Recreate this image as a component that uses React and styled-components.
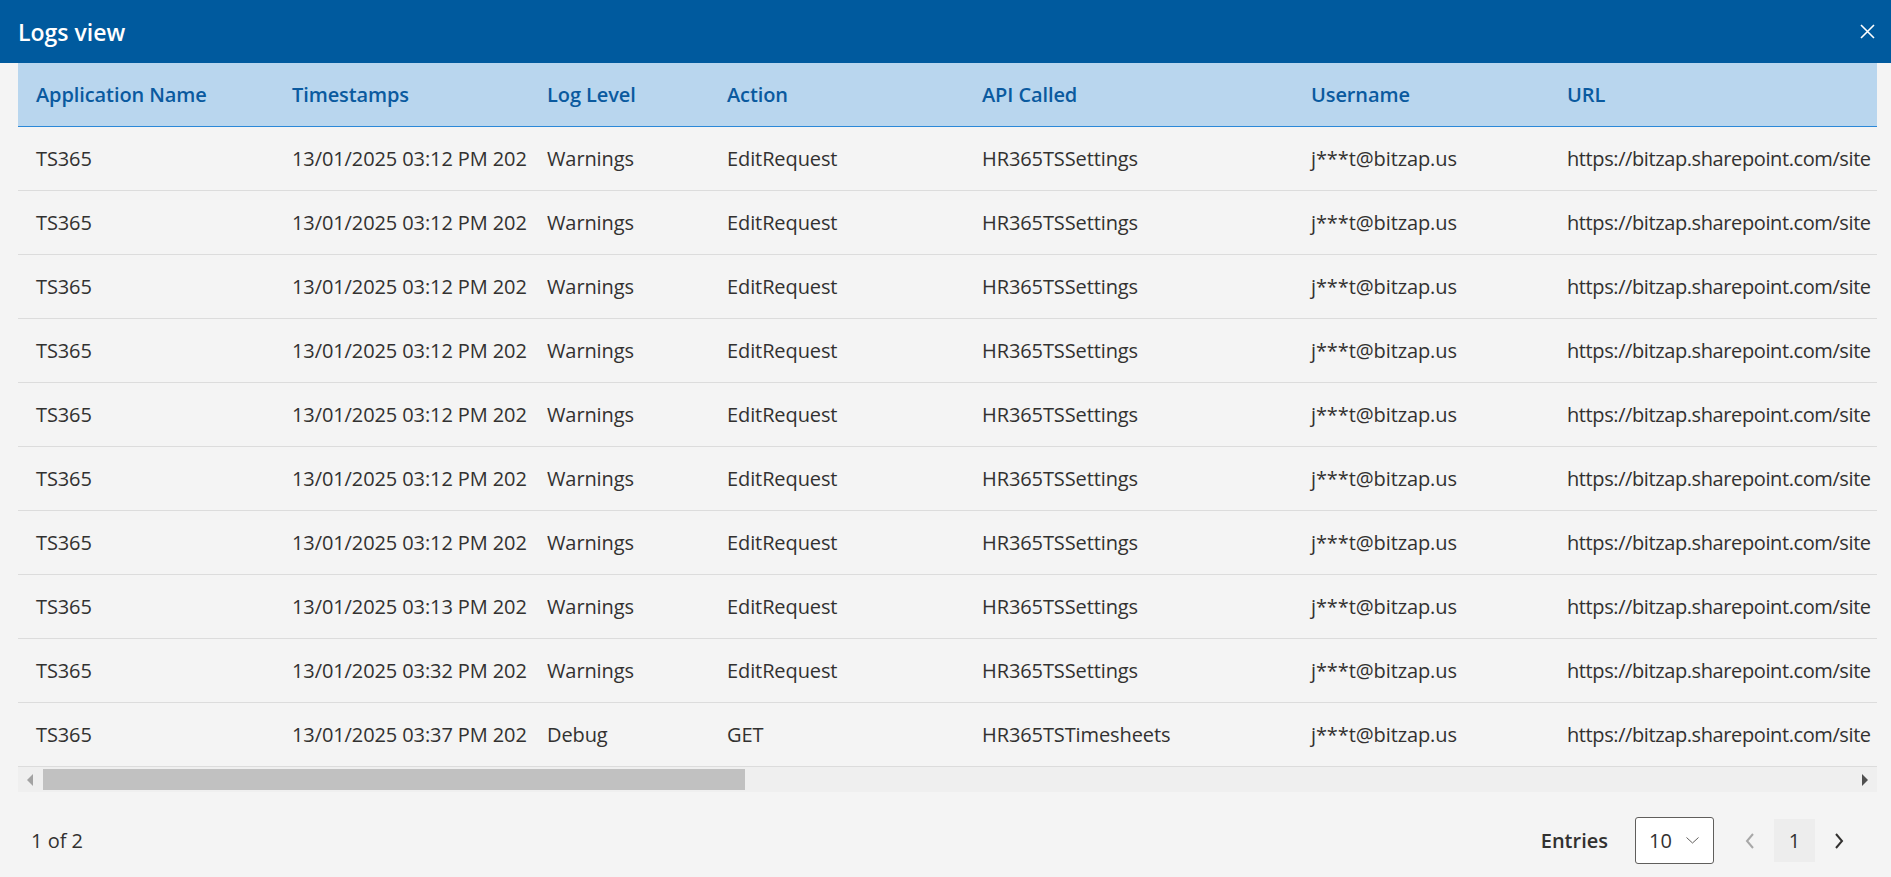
import React from 'react';
import styled, { createGlobalStyle } from 'styled-components';

const GlobalStyle = createGlobalStyle`
  html, body {
    margin: 0;
    padding: 0;
    background: #f4f4f4;
    font-family: "Open Sans", "Noto Sans", sans-serif;
  }
  * { box-sizing: border-box; }
`;

const columns = [
  { key: 'app', label: 'Application Name', width: '256px' },
  { key: 'time', label: 'Timestamps', width: '255px' },
  { key: 'level', label: 'Log Level', width: '180px' },
  { key: 'action', label: 'Action', width: '255px' },
  { key: 'api', label: 'API Called', width: '329px' },
  { key: 'user', label: 'Username', width: '256px' },
  { key: 'url', label: 'URL', width: 'minmax(0, 1fr)', tight: true },
];

const gridCols = columns.map((c) => c.width).join(' ');

const makeRow = (time, level = 'Warnings', action = 'EditRequest', api = 'HR365TSSettings') => ({
  app: 'TS365',
  time: `13/01/2025 ${time} 202`,
  level,
  action,
  api,
  user: 'j***t@bitzap.us',
  url: 'https://bitzap.sharepoint.com/site',
});

const logs = [
  makeRow('03:12 PM'),
  makeRow('03:12 PM'),
  makeRow('03:12 PM'),
  makeRow('03:12 PM'),
  makeRow('03:12 PM'),
  makeRow('03:12 PM'),
  makeRow('03:12 PM'),
  makeRow('03:13 PM'),
  makeRow('03:32 PM'),
  makeRow('03:37 PM', 'Debug', 'GET', 'HR365TSTimesheets'),
];

const Page = styled.div`
  height: 100vh;
  display: flex;
  flex-direction: column;
`;

const TitleBar = styled.header`
  height: 63px;
  flex: none;
  background: #005a9e;
  display: flex;
  align-items: center;
  justify-content: space-between;
  padding: 0 9px 0 18px;
`;

const Title = styled.h1`
  margin: 0;
  color: #fff;
  font-size: 23px;
  font-weight: 600;
`;

const CloseButton = styled.button`
  width: 30px;
  height: 30px;
  border: 0;
  background: transparent;
  display: flex;
  align-items: center;
  justify-content: center;
  padding: 0;
  cursor: pointer;
`;

const Body = styled.section`
  padding: 0 14px 0 18px;
`;

const Viewport = styled.div`
  overflow: hidden;
`;

const Row = styled.div`
  display: grid;
  grid-template-columns: ${gridCols};
  height: 64px;
  align-items: center;
  background: ${(p) => (p.$head ? '#b9d6ee' : 'transparent')};
  border-bottom: 1px solid ${(p) => (p.$head ? '#2b88d8' : '#dcdcdc')};
`;

const Cell = styled.div`
  padding-left: 18px;
  white-space: nowrap;
  overflow: hidden;
  font-size: 20px;
  color: ${(p) => (p.$head ? '#0a5a9f' : '#323130')};
  font-weight: ${(p) => (p.$head ? 600 : 400)};
  letter-spacing: ${(p) => (p.$tight ? '-0.4px' : '-0.1px')};
`;

const ScrollTrack = styled.div`
  height: 25px;
  background: #efefef;
  display: flex;
  align-items: center;
`;

const ScrollArrow = styled.div`
  width: 25px;
  height: 100%;
  display: flex;
  align-items: center;
  justify-content: center;
  flex: none;
`;

const Thumb = styled.div`
  width: 702px;
  height: 21px;
  background: #c1c1c1;
`;

const Spacer = styled.div`
  flex: 1;
`;

const Footer = styled.footer`
  flex: 1;
  display: flex;
  align-items: center;
  justify-content: space-between;
  padding: 12px 45px 0 31px;
`;

const PageInfo = styled.span`
  font-size: 20px;
  color: #323130;
`;

const Pager = styled.div`
  display: flex;
  align-items: center;
`;

const EntriesLabel = styled.span`
  font-size: 20px;
  font-weight: 600;
  color: #323130;
  margin-right: 27px;
`;

const Select = styled.div`
  width: 79px;
  height: 47px;
  border: 1px solid #605e5c;
  border-radius: 3px;
  background: #fff;
  display: flex;
  align-items: center;
  padding: 0 14px 0 13px;
  justify-content: space-between;
  font-size: 20px;
  color: #323130;
  margin-right: 29px;
`;

const NavButton = styled.button`
  border: 0;
  background: transparent;
  padding: 0;
  width: 14px;
  height: 43px;
  display: flex;
  align-items: center;
  justify-content: center;
  cursor: ${(p) => (p.disabled ? 'default' : 'pointer')};
`;

const PageNumber = styled.div`
  width: 41px;
  height: 43px;
  margin: 0 17px;
  background: #ededed;
  display: flex;
  align-items: center;
  justify-content: center;
  font-size: 20px;
  color: #323130;
`;

const Chevron = ({ dir, color }) => (
  <svg width="10" height="16" viewBox="0 0 10 16">
    <polyline
      points={dir === 'left' ? '8,1 2,8 8,15' : '2,1 8,8 2,15'}
      fill="none"
      stroke={color}
      strokeWidth="2"
    />
  </svg>
);

const App = () => (
  <Page>
    <GlobalStyle />
    <TitleBar>
      <Title>Logs view</Title>
      <CloseButton aria-label="Close">
        <svg width="15" height="15" viewBox="0 0 15 15">
          <path d="M1 1 L14 14 M14 1 L1 14" stroke="#fff" strokeWidth="1.6" />
        </svg>
      </CloseButton>
    </TitleBar>
    <Body>
      <Viewport>
        <Row $head>
          {columns.map((c) => (
            <Cell key={c.key} $head>{c.label}</Cell>
          ))}
        </Row>
        {logs.map((log, i) => (
          <Row key={i}>
            {columns.map((c) => (
              <Cell key={c.key} $tight={c.tight}>{log[c.key]}</Cell>
            ))}
          </Row>
        ))}
      </Viewport>
      <ScrollTrack>
        <ScrollArrow>
          <svg width="7" height="12" viewBox="0 0 7 12">
            <polygon points="6,0 0,6 6,12" fill="#a3a3a3" />
          </svg>
        </ScrollArrow>
        <Thumb />
        <Spacer />
        <ScrollArrow>
          <svg width="7" height="12" viewBox="0 0 7 12">
            <polygon points="1,0 7,6 1,12" fill="#505050" />
          </svg>
        </ScrollArrow>
      </ScrollTrack>
    </Body>
    <Footer>
      <PageInfo>1 of 2</PageInfo>
      <Pager>
        <EntriesLabel>Entries</EntriesLabel>
        <Select>
          <span>10</span>
          <svg width="13" height="7" viewBox="0 0 13 7">
            <polyline points="0.5,0.5 6.5,6 12.5,0.5" fill="none" stroke="#605e5c" strokeWidth="1" />
          </svg>
        </Select>
        <NavButton disabled aria-label="Previous page">
          <Chevron dir="left" color="#a8a8a8" />
        </NavButton>
        <PageNumber>1</PageNumber>
        <NavButton aria-label="Next page">
          <Chevron dir="right" color="#323130" />
        </NavButton>
      </Pager>
    </Footer>
  </Page>
);

export default App;
